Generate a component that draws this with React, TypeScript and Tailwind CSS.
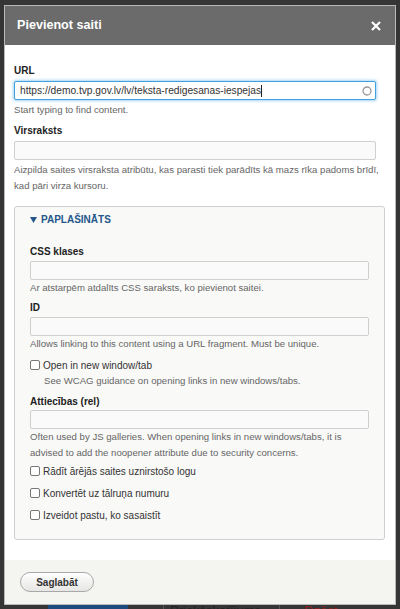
const Label = ({ children, className = "" }: { children: React.ReactNode; className?: string }) => (
  <div className={`text-[10px] font-bold text-[#222] leading-[13px] ${className}`}>{children}</div>
);

const Input = ({ className = "" }: { className?: string }) => (
  <div className={`h-[19px] rounded-[2px] border border-[#cfcfcf] bg-[#fafafa] ${className}`}></div>
);

const Help = ({ children, className = "" }: { children: React.ReactNode; className?: string }) => (
  <div className={`text-[9.6px] leading-[16px] text-[#666] ${className}`}>{children}</div>
);

const Check = ({ label, className = "" }: { label: string; className?: string }) => (
  <div className={`flex items-center gap-[3px] h-[16px] ${className}`}>
    <span className="w-[10px] h-[10px] rounded-[2px] border border-[#777] bg-white"></span>
    <span className="text-[10px] text-[#333]">{label}</span>
  </div>
);

export default function App() {
  return (
    <div
      className="w-[400px] h-[609px] bg-[#353535] overflow-hidden flex flex-col"
      style={{ fontFamily: '"Liberation Sans", Arial, sans-serif' }}
    >
      <div className="mt-[5px] mx-[4px] w-[392px] border border-[#b9b9b9] flex flex-col">
        <div className="h-[39px] bg-[#6b6b6b] flex items-center justify-between pl-[12px] pr-[14px]">
          <span className="text-white font-bold text-[12.6px]">Pievienot saiti</span>
          <svg width="10" height="10" viewBox="0 0 10 10">
            <path d="M1 1L9 9M9 1L1 9" stroke="#fff" strokeWidth="2.2" />
          </svg>
        </div>

        <div className="bg-white h-[515px] pl-[9px] pr-[10px] pt-[19px]">
          <Label>URL</Label>
          <div className="mt-[4px] w-[362px] h-[19px] rounded-[2px] border border-[#40a0e0] bg-white shadow-[0_0_3px_1px_#a6d4f5] flex items-center pl-[5px] pr-[3px]">
            <span className="text-[10.2px] text-[#333] flex-1 whitespace-nowrap">
              https://demo.tvp.gov.lv/lv/teksta-redigesanas-iespejas
              <span className="inline-block w-px h-[12px] bg-[#222] align-middle"></span>
            </span>
            <svg width="10" height="10" viewBox="0 0 10 10">
              <circle cx="5" cy="5" r="4" fill="none" stroke="#9a9a9a" strokeWidth="1.3" />
            </svg>
          </div>
          <Help className="mt-[2px]">Start typing to find content.</Help>

          <Label className="mt-[6px]">Virsraksts</Label>
          <Input className="mt-[4px] w-[362px]" />
          <Help className="mt-[2px]">
            Aizpilda saites virsraksta atribūtu, kas parasti tiek parādīts kā mazs rīka padoms brīdī, kad pāri virza kursoru.
          </Help>

          <div className="mt-[12px] border border-[#cfcfcf] rounded-[3px] bg-[#f9f9f8] h-[334px] px-[15px] pt-[6px]">
            <div className="flex items-center gap-[4px] text-[#24578a] font-bold text-[10px] leading-[13px]">
              <svg width="7" height="6" viewBox="0 0 7 6">
                <path d="M0 0H7L3.5 6Z" fill="#24578a" />
              </svg>
              <span>PAPLAŠINĀTS</span>
            </div>

            <Label className="mt-[19px]">CSS klases</Label>
            <Input className="mt-[3px]" />
            <Help>Ar atstarpēm atdalīts CSS saraksts, ko pievienot saitei.</Help>

            <Label className="mt-[5px]">ID</Label>
            <Input className="mt-[3px]" />
            <Help>Allows linking to this content using a URL fragment. Must be unique.</Help>

            <Check className="mt-[5px]" label="Open in new window/tab" />
            <Help className="pl-[14px]">See WCAG guidance on opening links in new windows/tabs.</Help>

            <Label className="mt-[6px]">Attiecības (rel)</Label>
            <Input className="mt-[2px]" />
            <Help>
              Often used by JS galleries. When opening links in new windows/tabs, it is advised to add the noopener attribute due to security concerns.
            </Help>

            <div className="mt-[2px] flex flex-col gap-[6px]">
              <Check label="Rādīt ārējās saites uznirstošo logu" />
              <Check label="Konvertēt uz tālruņa numuru" />
              <Check label="Izveidot pastu, ko sasaistīt" />
            </div>
          </div>
        </div>

        <div className="bg-[#f4f4f1] h-[44px] flex items-center pl-[15px]">
          <button className="w-[74px] h-[20px] rounded-full border border-[#a8a8a8] bg-gradient-to-b from-[#fefefe] to-[#e6e6e4] text-[10px] font-bold text-[#333]">
            Saglabāt
          </button>
        </div>
      </div>

      <div className="flex-1 flex items-start pl-[48px] overflow-hidden">
        <div className="w-[80px] h-full bg-[#1c4a7e]"></div>
        <div className="ml-[35px] w-px h-full bg-[#555]"></div>
        <div className="ml-[6px] text-[13px] leading-[13px] text-[#222] -mt-[1px]">Priekšskatījums</div>
        <div className="ml-[18px] w-px h-full bg-[#555]"></div>
        <div className="ml-[24px] text-[13px] leading-[13px] text-[#8a2020] -mt-[1px]">Dzēst</div>
      </div>
    </div>
  );
}
